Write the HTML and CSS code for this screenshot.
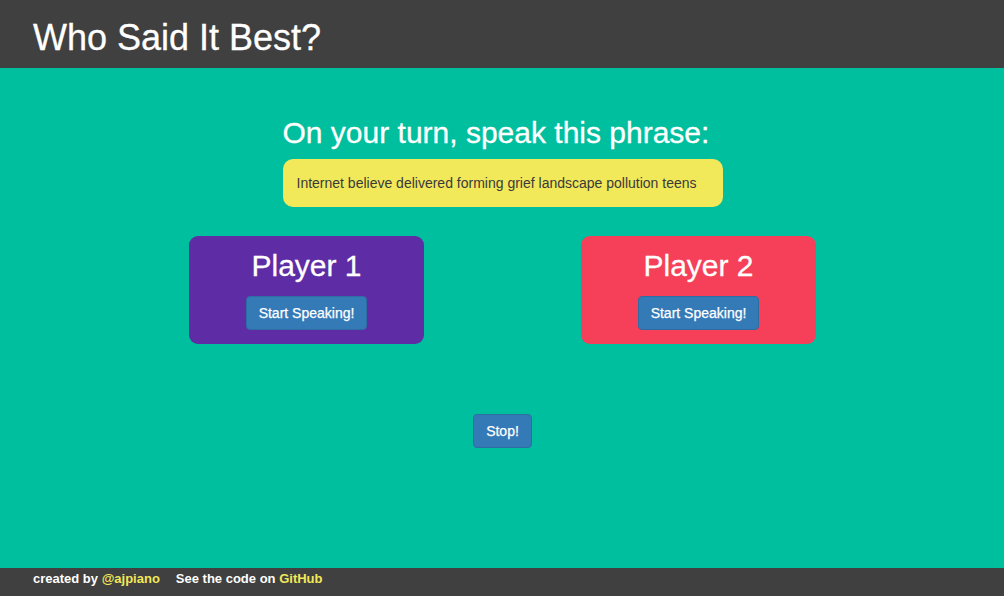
FILE: index.html
```html
<!DOCTYPE html>
<html lang="en">
<head>
<meta charset="utf-8">
<title>Who Said It Best?</title>
<link rel="stylesheet" href="styles.css">
</head>
<body>
<header class="site-header">
  <h1 class="site-title">Who Said It Best?</h1>
</header>
<main class="game">
  <section class="phrase-block">
    <h2 class="phrase-heading">On your turn, speak this phrase:</h2>
    <div class="phrase-box">Internet believe delivered forming grief landscape pollution teens</div>
  </section>
  <section class="players">
    <div class="player-card player-one">
      <h2 class="player-name">Player 1</h2>
      <button class="btn">Start Speaking!</button>
    </div>
    <div class="player-card player-two">
      <h2 class="player-name">Player 2</h2>
      <button class="btn">Start Speaking!</button>
    </div>
  </section>
  <div class="stop-row">
    <button class="btn">Stop!</button>
  </div>
</main>
<footer class="site-footer">
  <span class="credit">created by <a href="#" class="link">@ajpiano</a></span>
  <span class="credit">See the code on <a href="#" class="link">GitHub</a></span>
</footer>
</body>
</html>
```
FILE: styles.css
```css
* { box-sizing: border-box; }
html, body { margin: 0; padding: 0; }
body {
  font-family: "Liberation Sans", Arial, Helvetica, sans-serif;
  color: #fff;
  background: #00bf9e;
  min-height: 100vh;
  display: flex;
  flex-direction: column;
}
.site-header {
  background: #404040;
  height: 68px;
  padding: 18px 32px 10px 33px;
}
.site-title {
  margin: 0;
  font-size: 36px;
  line-height: 40px;
  font-weight: normal;
  color: #fff;
  -webkit-text-stroke: 0.3px #fff;
}
.game {
  flex: 1;
  display: flex;
  flex-direction: column;
  align-items: center;
  padding-top: 48px;
  padding-left: 1px;
}
.phrase-block {
  width: 440px;
}
.phrase-heading {
  margin: 0 0 10px;
  font-size: 30px;
  line-height: 33px;
  font-weight: normal;
  -webkit-text-stroke: 0.3px #fff;
}
.phrase-box {
  background: #f1e85a;
  color: #3a3a3a;
  border-radius: 10px;
  padding: 14px 14px;
  font-size: 14px;
  line-height: 20px;
}
.players {
  display: flex;
  gap: 157px;
  margin-top: 29px;
}
.player-card {
  width: 235px;
  height: 108px;
  border-radius: 9px;
  padding: 13px 0 14px;
  display: flex;
  flex-direction: column;
  align-items: center;
}
.player-one { background: #5e2ca5; }
.player-two { background: #f63f58; }
.player-name {
  margin: 0 0 14px;
  font-size: 30px;
  line-height: 33px;
  font-weight: normal;
  -webkit-text-stroke: 0.3px #fff;
}
.btn {
  font-family: "Liberation Sans", Arial, Helvetica, sans-serif;
  font-size: 14px;
  line-height: 20px;
  padding: 6px 12px;
  color: #fff;
  background: #337ab7;
  border: 1px solid #2e6da4;
  border-radius: 4px;
  -webkit-text-stroke: 0.25px #fff;
  cursor: pointer;
}
.stop-row {
  margin-top: 70px;
  display: flex;
  justify-content: center;
}
.site-footer {
  background: #404040;
  height: 28px;
  padding: 1px 32px 0 33px;
  font-size: 13px;
  line-height: 20px;
  font-weight: bold;
  display: flex;
  gap: 16px;
}
.link {
  color: #f1e85a;
  text-decoration: none;
}
```
